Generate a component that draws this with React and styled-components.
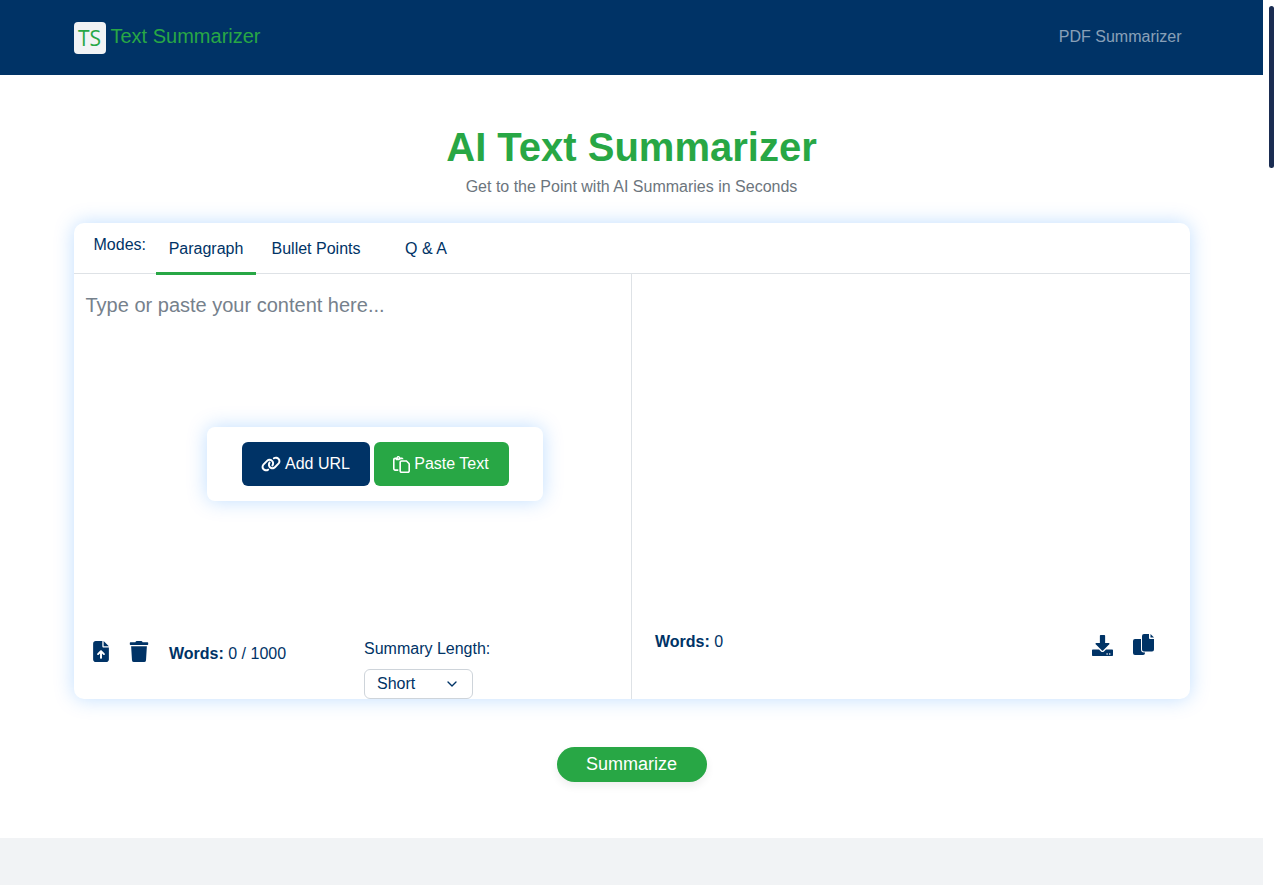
import styled, { createGlobalStyle } from "styled-components";
import { FaTrash, FaDownload } from "react-icons/fa";
import { FaRegPaste, FaLink, FaFileArrowUp } from "react-icons/fa6";
import { FiChevronDown } from "react-icons/fi";

const navy = "#003366";
const green = "#28a745";

const GlobalStyle = createGlobalStyle`
  html, body {
    margin: 0;
    height: 885px;
    overflow: hidden;
    background: #fff;
  }
  * {
    box-sizing: border-box;
  }
  body {
    font-family: "Liberation Sans", Arial, sans-serif;
    font-size: 16px;
    color: ${navy};
  }
`;

const Shell = styled.div`
  display: flex;
  height: 885px;
`;

const Page = styled.div`
  width: 1263px;
  display: flex;
  flex-direction: column;
`;

const ScrollTrack = styled.div`
  width: 17px;
  padding: 6px 6px 0;
`;

const ScrollThumb = styled.div`
  width: 5px;
  height: 162px;
  border-radius: 3px;
  background: #1b2d52;
`;

const Header = styled.header`
  height: 75px;
  background: ${navy};
  flex-shrink: 0;
`;

const Container = styled.div`
  width: 1140px;
  margin: 0 auto;
  padding: 0 12px;
`;

const Nav = styled(Container)`
  height: 100%;
  display: flex;
  align-items: center;
  justify-content: space-between;
`;

const Brand = styled.div`
  display: flex;
  align-items: center;
  gap: 5px;
  font-size: 20px;
  color: ${green};
`;

const BrandName = styled.span`
  margin-bottom: 2px;
`;

const Logo = styled.div`
  width: 32px;
  height: 32px;
  border-radius: 4px;
  background: #f1f3f5;
  display: flex;
  align-items: center;
  justify-content: center;
  font-family: "Open Sans", sans-serif;
  font-size: 21px;
  color: ${green};
`;

const NavLink = styled.a`
  font-size: 16px;
  color: rgba(255, 255, 255, 0.55);
  padding: 0 8px 2px 0;
`;

const Main = styled.main`
  flex: 1;
`;

const Hero = styled.div`
  text-align: center;
  padding-top: 48px;
  margin-bottom: 24px;
`;

const Title = styled.h1`
  margin: 0;
  font-size: 40px;
  line-height: 48px;
  font-weight: 700;
  color: ${green};
`;

const Subtitle = styled.p`
  margin: 4px 0 0;
  line-height: 24px;
  color: #6c757d;
`;

const Card = styled.section`
  height: 476px;
  background: #fff;
  border-radius: 10px;
  box-shadow: 0 0 20px rgba(0, 123, 255, 0.25);
  display: flex;
  flex-direction: column;
`;

const Tabs = styled.div`
  height: 51px;
  flex-shrink: 0;
  display: flex;
  border-bottom: 1px solid #dee2e6;
`;

const ModesLabel = styled.span`
  padding: 13px 10px 0 20px;
  line-height: 18px;
  width: 82px;
`;

const Tab = styled.button`
  width: ${(p) => p.$width}px;
  height: 52px;
  padding: 2px 0 0 1px;
  border: 0;
  border-bottom: 3px solid ${(p) => (p.$active ? green : "transparent")};
  background: none;
  font: inherit;
  color: ${navy};
  text-align: center;
`;

const Panes = styled.div`
  flex: 1;
  display: grid;
  grid-template-columns: 557px 1fr;
  min-height: 0;
`;

const Pane = styled.div`
  position: relative;
  display: flex;
  flex-direction: column;
  justify-content: space-between;
  border-left: ${(p) => (p.$divided ? "1px solid #dee2e6" : "0")};
`;

const Placeholder = styled.div`
  padding: 19px 12px 0;
  font-size: 20px;
  line-height: 24px;
  color: #76818c;
`;

const Overlay = styled.div`
  position: absolute;
  left: 133px;
  top: 153px;
  width: 336px;
  height: 74px;
  padding-left: 1px;
  background: #fff;
  border-radius: 8px;
  box-shadow: 0 0 20px rgba(0, 123, 255, 0.25);
  display: flex;
  align-items: center;
  justify-content: center;
  gap: 4px;
`;

const ActionButton = styled.button`
  height: 44px;
  width: ${(p) => p.$width}px;
  border: 0;
  border-radius: 6px;
  background: ${(p) => p.$bg};
  color: #fff;
  font: inherit;
  display: flex;
  align-items: center;
  justify-content: center;
  gap: 4px;
  svg {
    width: ${(p) => p.$icon}px;
    height: ${(p) => p.$icon}px;
  }
`;

const LeftFooter = styled.div`
  display: flex;
  align-items: flex-start;
  padding-left: 18px;
  height: 61px;
  margin-top: auto;
`;

const IconButton = styled.span`
  display: inline-flex;
  color: ${navy};
  margin-right: ${(p) => p.$gap}px;
  margin-top: ${(p) => p.$top || 0}px;
  svg {
    width: ${(p) => p.$size}px;
    height: ${(p) => p.$size2 || p.$size}px;
  }
`;

const WordCount = styled.div`
  line-height: 24px;
  margin-top: ${(p) => p.$top}px;
  margin-left: 0.5px;
  width: ${(p) => p.$width}px;
  b {
    font-weight: 700;
  }
`;

const LengthGroup = styled.div`
  display: flex;
  flex-direction: column;
  margin-top: -2px;
`;

const LengthLabel = styled.label`
  line-height: 24px;
  margin-bottom: 8px;
  margin-top: 1px;
`;

const Select = styled.div`
  width: 109px;
  height: 30px;
  border: 1px solid #ced4da;
  border-radius: 6px;
  padding: 0 12px;
  display: flex;
  align-items: center;
  justify-content: space-between;
  svg {
    width: 16px;
    height: 16px;
  }
`;

const RightFooter = styled.div`
  display: flex;
  align-items: flex-start;
  padding: 0 36px 0 23px;
  height: 70px;
  margin-top: auto;
  justify-content: space-between;
`;

const RightIcons = styled.div`
  display: flex;
`;

const SubmitRow = styled.div`
  display: flex;
  justify-content: center;
  padding-top: 48px;
`;

const SubmitButton = styled.button`
  width: 150px;
  height: 35px;
  border: 0;
  border-radius: 18px;
  background: ${green};
  color: #fff;
  font: inherit;
  font-size: 18px;
  box-shadow: 0 4px 8px rgba(0, 0, 0, 0.07);
`;

const Footer = styled.footer`
  height: 47px;
  flex-shrink: 0;
  background: #f1f3f5;
`;

// two sheets, the front one with a folded corner
function CopyIcon() {
  return (
    <svg viewBox="0 0 21 21" fill="currentColor">
      <path d="M2 5h6v10.5a3 3 0 0 0 3 3h1V19a2 2 0 0 1-2 2H2a2 2 0 0 1-2-2V7a2 2 0 0 1 2-2z" />
      <path d="M11 0h5v4a1 1 0 0 0 1 1h4v10.5a2 2 0 0 1-2 2h-8a2 2 0 0 1-2-2V2a2 2 0 0 1 2-2z" />
      <path d="M17.5 0L21 3.5h-3.5z" />
    </svg>
  );
}

export default function App() {
  return (
    <>
      <GlobalStyle />
      <Shell>
        <Page>
          <Header>
            <Nav>
              <Brand>
                <Logo>TS</Logo>
                <BrandName>Text Summarizer</BrandName>
              </Brand>
              <NavLink>PDF Summarizer</NavLink>
            </Nav>
          </Header>
          <Main>
            <Container>
              <Hero>
                <Title>AI Text Summarizer</Title>
                <Subtitle>Get to the Point with AI Summaries in Seconds</Subtitle>
              </Hero>
              <Card>
                <Tabs>
                  <ModesLabel>Modes:</ModesLabel>
                  <Tab $width={100} $active>
                    Paragraph
                  </Tab>
                  <Tab $width={120}>Bullet Points</Tab>
                  <Tab $width={100}>Q &amp; A</Tab>
                </Tabs>
                <Panes>
                  <Pane>
                    <Placeholder>Type or paste your content here...</Placeholder>
                    <Overlay>
                      <ActionButton $bg={navy} $width={128} $icon={20}>
                        <FaLink />
                        Add URL
                      </ActionButton>
                      <ActionButton $bg={green} $width={135} $icon={17}>
                        <FaRegPaste />
                        Paste Text
                      </ActionButton>
                    </Overlay>
                    <LeftFooter>
                      <IconButton $gap={19} $size={18} $size2={21} $top={3}>
                        <FaFileArrowUp />
                      </IconButton>
                      <IconButton $gap={20} $size={20} $size2={21} $top={3}>
                        <FaTrash />
                      </IconButton>
                      <WordCount $top={4} $width={195}>
                        <b>Words:</b> 0 / 1000
                      </WordCount>
                      <LengthGroup>
                        <LengthLabel>Summary Length:</LengthLabel>
                        <Select>
                          Short
                          <FiChevronDown />
                        </Select>
                      </LengthGroup>
                    </LeftFooter>
                  </Pane>
                  <Pane $divided>
                    <RightFooter>
                      <WordCount $top={1} $width={100}>
                        <b>Words:</b> 0
                      </WordCount>
                      <RightIcons>
                        <IconButton $gap={20} $size={21} $top={6}>
                          <FaDownload />
                        </IconButton>
                        <IconButton $gap={0} $size={21} $top={5}>
                          <CopyIcon />
                        </IconButton>
                      </RightIcons>
                    </RightFooter>
                  </Pane>
                </Panes>
              </Card>
              <SubmitRow>
                <SubmitButton>Summarize</SubmitButton>
              </SubmitRow>
            </Container>
          </Main>
          <Footer />
        </Page>
        <ScrollTrack>
          <ScrollThumb />
        </ScrollTrack>
      </Shell>
    </>
  );
}
